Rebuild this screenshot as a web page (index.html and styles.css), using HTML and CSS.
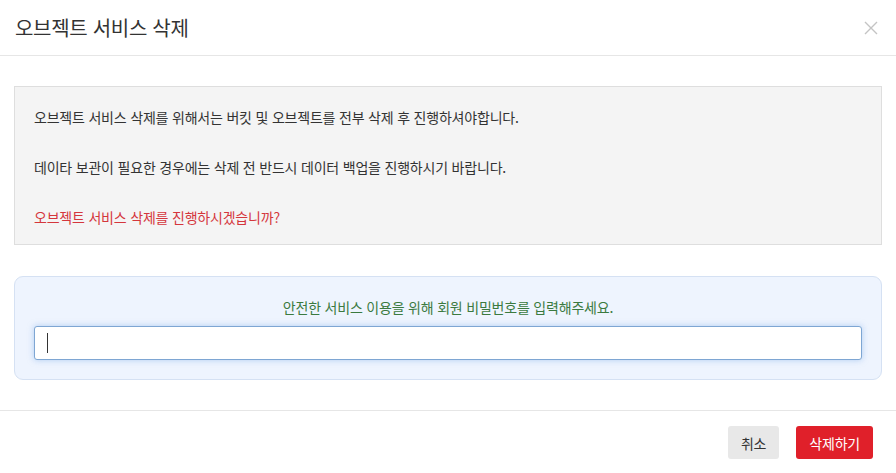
FILE: index.html
```html
<!DOCTYPE html>
<html lang="ko">
<head>
    <meta charset="UTF-8">
    <meta name="viewport" content="width=device-width, initial-scale=1.0">
    <title>오브젝트 서비스 삭제</title>
    <link rel="stylesheet" href="styles.css">
</head>
<body>
    <div class="modal">
        <div class="modal_header">
            <h2 class="modal_title">오브젝트 서비스 삭제</h2>
            <a href="javascript:;" class="modal_close" aria-label="닫기">
                <svg width="14" height="14" viewBox="0 0 14 14">
                    <path d="M1 1 L13 13 M13 1 L1 13" stroke="#c4c4c4" stroke-width="1.4" fill="none"/>
                </svg>
            </a>
        </div>
        <div class="modal_body">
            <div class="notice_box">
                <p>오브젝트 서비스 삭제를 위해서는 버킷 및 오브젝트를 전부 삭제 후 진행하셔야합니다.</p>
                <p>데이타 보관이 필요한 경우에는 삭제 전 반드시 데이터 백업을 진행하시기 바랍니다.</p>
                <p class="warn">오브젝트 서비스 삭제를 진행하시겠습니까?</p>
            </div>
            <div class="pw_box">
                <p class="pw_guide">안전한 서비스 이용을 위해 회원 비밀번호를 입력해주세요.</p>
                <div class="pw_field">
                    <input type="password" class="pw_input">
                </div>
            </div>
        </div>
        <div class="modal_footer">
            <button type="button" class="btn btn_cancel">취소</button>
            <button type="button" class="btn btn_delete">삭제하기</button>
        </div>
    </div>
</body>
</html>
```

FILE: styles.css
```css
*{
    margin: 0;
    padding: 0;
    box-sizing: border-box;
}
body{
    font-family: "Noto Sans CJK KR", "Noto Sans", sans-serif;
    color: #333;
    background-color: #fff;
    letter-spacing: -0.2px;
}
.modal{
    width: 896px;
    height: 473px;
    display: flex;
    flex-direction: column;
}
.modal_header{
    height: 56px;
    padding: 0 18px 0 15px;
    display: flex;
    align-items: center;
    justify-content: space-between;
    border-bottom: 1px solid #e6e6e6;
}
.modal_title{
    font-size: 20px;
    font-weight: 400;
    line-height: 28px;
    color: #333;
    letter-spacing: -0.3px;
}
.modal_close{
    display: block;
    width: 14px;
    height: 14px;
}
.modal_close svg{
    display: block;
}
.modal_body{
    padding: 30px 14px 30px 14px;
    border-bottom: 1px solid #e6e6e6;
}
.notice_box{
    background-color: #f4f4f4;
    border: 1px solid #dedede;
    padding: 20px 19px 17px;
}
.notice_box p{
    font-size: 14px;
    line-height: 20px;
}
.notice_box p + p{
    margin-top: 30px;
}
.notice_box .warn{
    color: #d4363c;
}
.pw_box{
    margin-top: 31px;
    background-color: #eef4fe;
    border: 1px solid #d5e1f3;
    border-radius: 9px;
    padding: 20px 19px 19px;
}
.pw_guide{
    font-size: 14px;
    line-height: 20px;
    color: #3b7a3f;
    text-align: center;
}
.pw_field{
    margin-top: 9px;
    position: relative;
}
/* 입력 커서 */
.pw_field::after{
    content: "";
    position: absolute;
    left: 13px;
    top: 7px;
    width: 1px;
    height: 20px;
    background-color: #333;
}
.pw_input{
    display: block;
    width: 100%;
    height: 34px;
    border: 1px solid #7ea6d3;
    border-radius: 3px;
    background-color: #fff;
    box-shadow: 0 0 6px rgba(120, 170, 230, 0.55);
    outline: none;
    font-size: 14px;
    padding: 0 12px;
}
.modal_footer{
    flex: 1;
    display: flex;
    justify-content: flex-end;
    align-items: flex-start;
    gap: 17px;
    padding: 15px 23px 0 0;
}
.btn{
    height: 33px;
    border: 0;
    border-radius: 3px;
    font-family: inherit;
    font-size: 14px;
    letter-spacing: -0.2px;
    padding: 0 13px;
    cursor: pointer;
}
.btn_cancel{
    background-color: #e8e8e8;
    color: #333;
}
.btn_delete{
    background-color: #e0202a;
    color: #fff;
}
```
